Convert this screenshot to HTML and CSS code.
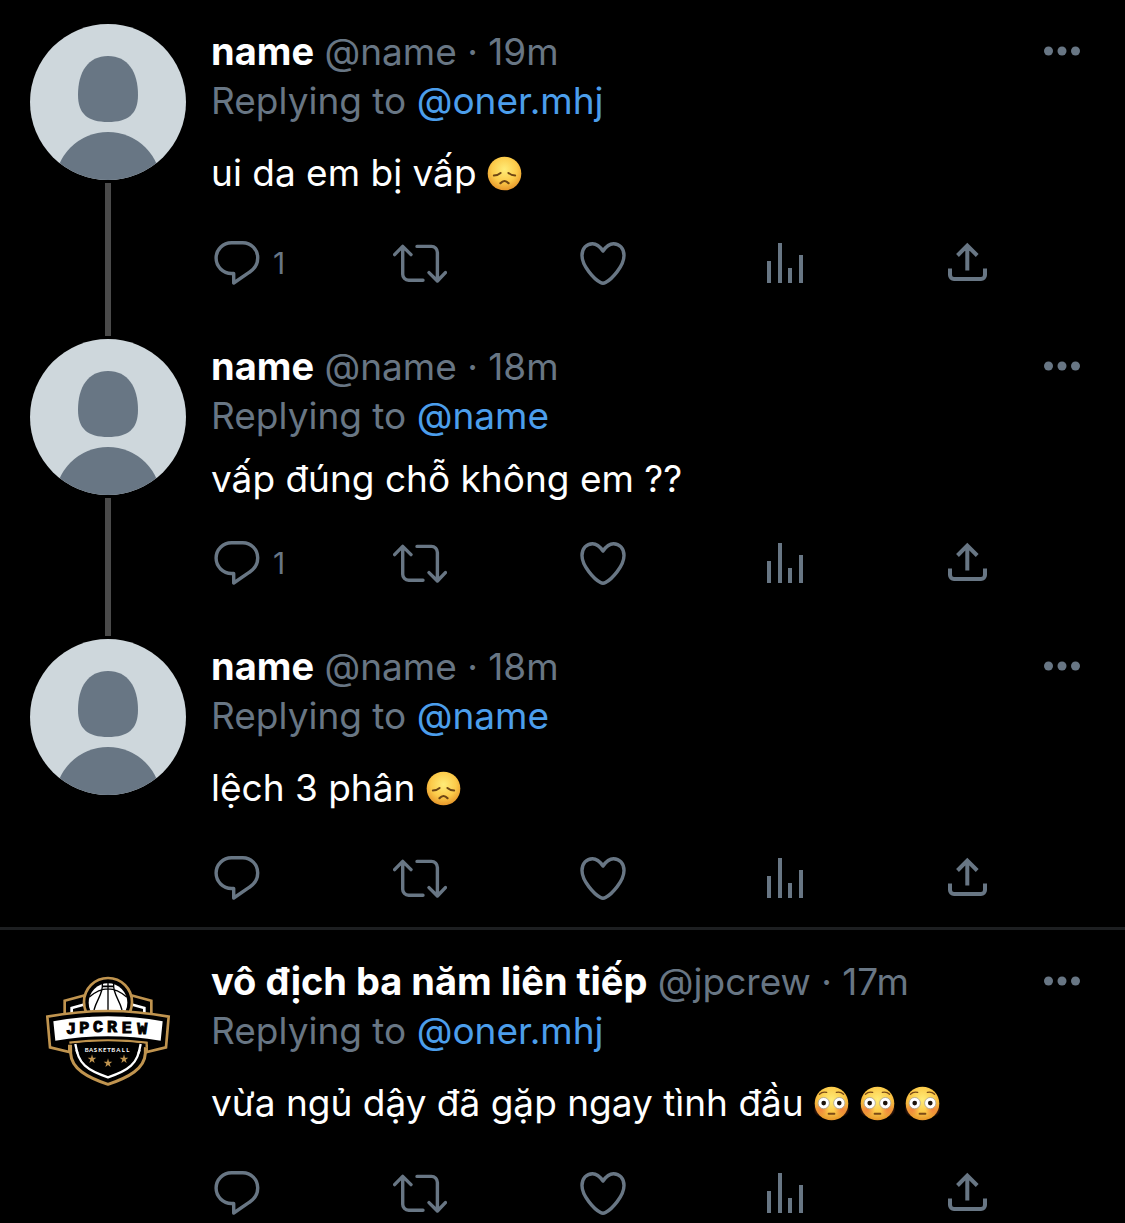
FILE: index.html
```html
<!doctype html>
<html lang="vi">
  <head>
    <meta charset="UTF-8" />
    <meta name="viewport" content="width=device-width, initial-scale=1" />
    <title>Replies</title>
    <link rel="stylesheet" href="styles.css">
  </head>
  <body>
    <!-- Shared icons -->
    <svg class="sprite" aria-hidden="true">
      <defs>
        <radialGradient id="face" cx="50%" cy="38%" r="62%">
          <stop offset="0" stop-color="#ffec78" />
          <stop offset="0.6" stop-color="#fccb4a" />
          <stop offset="1" stop-color="#e6962a" />
        </radialGradient>
        <radialGradient id="blush">
          <stop offset="0" stop-color="#f0703a" stop-opacity="0.75" />
          <stop offset="1" stop-color="#f0703a" stop-opacity="0" />
        </radialGradient>
      </defs>
      <symbol id="person" viewBox="0 0 156 156">
        <rect width="156" height="156" fill="#ced7dc" />
        <path fill="#687684" d="M78 32C98 32 108 48 108 71C108 90 98 98 78 98C58 98 48 90 48 71C48 48 58 32 78 32Z" />
        <circle cx="78" cy="161" r="53" fill="#687684" />
      </symbol>
      <symbol id="dots" viewBox="0 0 36 36">
        <circle cx="4.5" cy="18" r="4.5" fill="currentColor" />
        <circle cx="18" cy="18" r="4.5" fill="currentColor" />
        <circle cx="31.5" cy="18" r="4.5" fill="currentColor" />
      </symbol>
      <symbol id="reply" viewBox="0 0 54 54">
        <path fill="none" stroke="currentColor" stroke-width="3.4" stroke-linejoin="round" d="M20.5 6.7H31.5A15 15 0 0 1 46.7 22C46.7 28 43.5 33 38.5 36.2L22.7 47V37.5H20.5A15.4 15.4 0 0 1 20.5 6.7Z" />
      </symbol>
      <symbol id="retweet" viewBox="0 0 54 54">
        <path fill="none" stroke="currentColor" stroke-width="3.4" stroke-linecap="round" stroke-linejoin="round" d="M1.6 18.6L9.7 10.4L18 18.6M9.7 11V38A6 6 0 0 0 15.7 44.3H30M24 10.4H38.4A6 6 0 0 1 44.4 16.4V44.6M36 36.6L44.4 45L52.4 36.6" />
      </symbol>
      <symbol id="heart" viewBox="0 0 54 54">
        <path fill="none" stroke="currentColor" stroke-width="3.4" stroke-linejoin="round" d="M27 15C24 10.5 20.5 7.7 16.5 7.7C10.5 7.7 6 12.5 6 19.5C6 30 18 43 24.5 46.6Q27 48 29.5 46.6C36 43 48 30 48 19.5C48 12.5 43.5 7.7 37.5 7.7C33.5 7.7 30 10.5 27 15Z" />
      </symbol>
      <symbol id="stats" viewBox="0 0 54 54">
        <path fill="currentColor" d="M9 25h4v22h-4zM20 7h4v40h-4zM30 32h4v15h-4zM41 19h4v28h-4z" />
      </symbol>
      <symbol id="share" viewBox="0 0 54 54">
        <path fill="none" stroke="currentColor" stroke-width="4" d="M17.5 19.5L27.3 9.5L37.2 19.5M27.3 10V34.5M10 32.5V39A4 4 0 0 0 14 43H41A4 4 0 0 0 45 39V32.5" />
      </symbol>
      <symbol id="sad" viewBox="0 0 36 36">
        <circle cx="18" cy="18" r="17.3" fill="url(#face)" />
        <path fill="none" stroke="#6d4514" stroke-width="2" stroke-linecap="round" d="M7 20Q11 20 14 17.4M29 20Q25 20 22 17.4" />
        <path fill="none" stroke="#6d4514" stroke-width="2.2" stroke-linecap="round" d="M13.8 28Q18 23.4 22.2 28" />
      </symbol>
      <symbol id="flushed" viewBox="0 0 36 36">
        <circle cx="18" cy="18" r="17.3" fill="url(#face)" />
        <circle cx="7.5" cy="24" r="8" fill="url(#blush)" />
        <circle cx="28.5" cy="24" r="8" fill="url(#blush)" />
        <circle cx="10" cy="17.6" r="5.8" fill="#fff" stroke="#a9a08c" stroke-width="0.8" />
        <circle cx="26" cy="17.6" r="5.8" fill="#fff" stroke="#a9a08c" stroke-width="0.8" />
        <circle cx="10" cy="17.6" r="2.4" fill="#1c120a" />
        <circle cx="26" cy="17.6" r="2.4" fill="#1c120a" />
        <path fill="none" stroke="#7a4a17" stroke-width="1.4" stroke-linecap="round" d="M5.6 8.4Q8.6 5.6 13 6.6M30.4 8.4Q27.4 5.6 23 6.6" />
        <path stroke="#7a4a17" stroke-width="2" stroke-linecap="round" d="M15 28.6H21" />
      </symbol>
    </svg>

    <main class="timeline">
      <section class="thread">
        <article class="tweet">
          <div class="side">
            <svg class="avatar" role="img" aria-label="name"><use href="#person" /></svg>
            <div class="line"></div>
          </div>
          <div class="content">
            <header class="tweet-header">
              <p class="author"><b>name</b> @name · 19m</p>
              <button class="more" aria-label="More"><svg><use href="#dots" /></svg></button>
            </header>
            <p class="replying">Replying to <a href="#">@oner.mhj</a></p>
            <p class="text text-emoji">ui da em bị vấp <svg class="emoji" role="img" aria-label="😞"><use href="#sad" /></svg></p>
            <div class="actions">
              <button aria-label="Reply"><svg><use href="#reply" /></svg><span>1</span></button>
              <button aria-label="Retweet"><svg><use href="#retweet" /></svg></button>
              <button aria-label="Like"><svg><use href="#heart" /></svg></button>
              <button aria-label="Stats"><svg><use href="#stats" /></svg></button>
              <button aria-label="Share"><svg><use href="#share" /></svg></button>
            </div>
          </div>
        </article>

        <article class="tweet">
          <div class="side">
            <svg class="avatar" role="img" aria-label="name"><use href="#person" /></svg>
            <div class="line"></div>
          </div>
          <div class="content">
            <header class="tweet-header">
              <p class="author"><b>name</b> @name · 18m</p>
              <button class="more" aria-label="More"><svg><use href="#dots" /></svg></button>
            </header>
            <p class="replying">Replying to <a href="#">@name</a></p>
            <p class="text">vấp đúng chỗ không em ??</p>
            <div class="actions">
              <button aria-label="Reply"><svg><use href="#reply" /></svg><span>1</span></button>
              <button aria-label="Retweet"><svg><use href="#retweet" /></svg></button>
              <button aria-label="Like"><svg><use href="#heart" /></svg></button>
              <button aria-label="Stats"><svg><use href="#stats" /></svg></button>
              <button aria-label="Share"><svg><use href="#share" /></svg></button>
            </div>
          </div>
        </article>

        <article class="tweet">
          <div class="side">
            <svg class="avatar" role="img" aria-label="name"><use href="#person" /></svg>
          </div>
          <div class="content">
            <header class="tweet-header">
              <p class="author"><b>name</b> @name · 18m</p>
              <button class="more" aria-label="More"><svg><use href="#dots" /></svg></button>
            </header>
            <p class="replying">Replying to <a href="#">@name</a></p>
            <p class="text text-emoji">lệch 3 phân <svg class="emoji" role="img" aria-label="😞"><use href="#sad" /></svg></p>
            <div class="actions">
              <button aria-label="Reply"><svg><use href="#reply" /></svg></button>
              <button aria-label="Retweet"><svg><use href="#retweet" /></svg></button>
              <button aria-label="Like"><svg><use href="#heart" /></svg></button>
              <button aria-label="Stats"><svg><use href="#stats" /></svg></button>
              <button aria-label="Share"><svg><use href="#share" /></svg></button>
            </div>
          </div>
        </article>
      </section>

      <section class="thread">
        <article class="tweet">
          <div class="side">
            <svg class="avatar" viewBox="0 -18 468 468" role="img" aria-label="JPCREW Basketball">
              <!-- back plates -->
              <path fill="#000" stroke="#c0944f" stroke-width="8" d="M104 164V122L165 106M364 164V122L303 106" />
              <path fill="none" stroke="#fff" stroke-width="8" d="M125 160V144L160 134M343 160V144L308 134" />
              <!-- ball -->
              <circle cx="234" cy="126" r="72" fill="#000" stroke="#c0944f" stroke-width="8" />
              <circle cx="234" cy="128" r="58" fill="#fff" />
              <path fill="none" stroke="#000" stroke-width="4" d="M234 68V160M178 111Q234 62 290 111M217 72C220 100 200 118 192 150M251 72C248 100 268 118 276 150" />
              <path stroke="#000" stroke-width="5" d="M216 79H252" />
              <!-- shield -->
              <path fill="#000" stroke="#c0944f" stroke-width="9" stroke-linejoin="round" d="M122 246Q234 230 346 246V280C344 326 296 352 234 373C172 352 124 326 122 280Z" />
              <path fill="none" stroke="#fff" stroke-width="7" d="M137 252C142 312 174 332 234 352C294 332 326 312 331 252" />
              <!-- banner -->
              <path fill="#000" stroke="#c0944f" stroke-width="8" d="M118 254V276L60 262L52 170Q234 136 416 170L408 262L350 276V254" />
              <path fill="#000" stroke="#c0944f" stroke-width="7" d="M118 248Q234 234 350 248V262" />
              <path fill="#fff" d="M70 184Q234 154 398 184L392 242Q234 216 76 242Z" />
              <path fill="#000" d="M126 251Q234 238 342 251L340 270H128Z" />
              <path fill="none" stroke="#fff" stroke-width="7" d="M136 252L142 280M332 252L326 280" />
              <text class="logo-name" y="221 219 216 216 219 221" x="123 163 204 246 290 337">JPCREW</text>
              <text class="logo-sub" y="276" x="164 177 191 205 219 232 244 259 275 289">BASKETBALL</text>
              <g fill="#c0944f">
                <path id="star" d="M186 283L189 293H199L191 299L194 309L186 303L178 309L181 299L173 293H183Z" />
                <use href="#star" x="48" y="12" />
                <use href="#star" x="96" />
              </g>
            </svg>
          </div>
          <div class="content">
            <header class="tweet-header">
              <p class="author"><b>vô địch ba năm liên tiếp</b> @jpcrew · 17m</p>
              <button class="more" aria-label="More"><svg><use href="#dots" /></svg></button>
            </header>
            <p class="replying">Replying to <a href="#">@oner.mhj</a></p>
            <p class="text text-emoji">vừa ngủ dậy đã gặp ngay tình đầu <svg class="emoji" role="img" aria-label="😳"><use href="#flushed" /></svg> <svg class="emoji" role="img" aria-label="😳"><use href="#flushed" /></svg> <svg class="emoji" role="img" aria-label="😳"><use href="#flushed" /></svg></p>
            <div class="actions">
              <button aria-label="Reply"><svg><use href="#reply" /></svg></button>
              <button aria-label="Retweet"><svg><use href="#retweet" /></svg></button>
              <button aria-label="Like"><svg><use href="#heart" /></svg></button>
              <button aria-label="Stats"><svg><use href="#stats" /></svg></button>
              <button aria-label="Share"><svg><use href="#share" /></svg></button>
            </div>
          </div>
        </article>
      </section>
    </main>
  </body>
</html>
```

FILE: styles.css
```css
* {
  box-sizing: border-box;
}

body {
  margin: 0;
  background-color: #000;
  color: #687684;
  font-family: Inter, "Noto Sans", sans-serif;
  font-size: 37px;
  line-height: 50px;
}

p {
  margin: 0;
}

a {
  color: #4c9eeb;
  text-decoration: none;
}

button {
  padding: 0;
  border: none;
  background: none;
  color: inherit;
  font: inherit;
  cursor: pointer;
}

.sprite {
  position: absolute;
  width: 0;
  height: 0;
}

.thread {
  padding: 24px 45px 0 30px;
  border-bottom: 3px solid #1d1f21;
}

.thread:last-child {
  border-bottom: none;
}

.tweet {
  display: flex;
  gap: 25px;
}

.side {
  display: flex;
  flex-direction: column;
  align-items: center;
}

.avatar {
  display: block;
  flex-shrink: 0;
  width: 156px;
  height: 156px;
  border-radius: 50%;
}

/* joins an avatar to the next one in the thread */
.line {
  flex: 1;
  width: 6px;
  margin: 3px 0;
  background-color: #4a4a4a;
}

.content {
  flex: 1;
  min-width: 0;
  padding: 2px 0 49px;
}

.tweet:last-child .content {
  padding-bottom: 22px;
}

.thread:last-child .content {
  padding-bottom: 0;
}

.tweet-header {
  display: flex;
  justify-content: space-between;
  align-items: center;
  height: 50px;
}

.author b {
  color: #fff;
  font-size: 38px;
  font-weight: 700;
}

.more svg {
  display: block;
  width: 36px;
  height: 36px;
}

.text {
  margin: 13px 0 32px;
  color: #fff;
}

.text-emoji {
  margin: 14px 0 31px;
  line-height: 65px;
}

.emoji {
  width: 35px;
  height: 35px;
  vertical-align: -5px;
}

.actions {
  display: grid;
  grid-template-columns: repeat(4, 1fr) 54px;
  padding-right: 86px;
}

.actions button {
  display: flex;
  align-items: center;
  gap: 8px;
  font-size: 30px;
}

.actions svg {
  width: 54px;
  height: 54px;
}

.logo-name {
  font-family: "Liberation Mono", monospace;
  font-size: 50px;
  font-weight: 700;
  text-anchor: middle;
  stroke: #000;
  stroke-width: 3px;
}

.logo-sub {
  font-family: Lato, sans-serif;
  font-size: 18px;
  font-weight: 700;
  fill: #fff;
}
```
